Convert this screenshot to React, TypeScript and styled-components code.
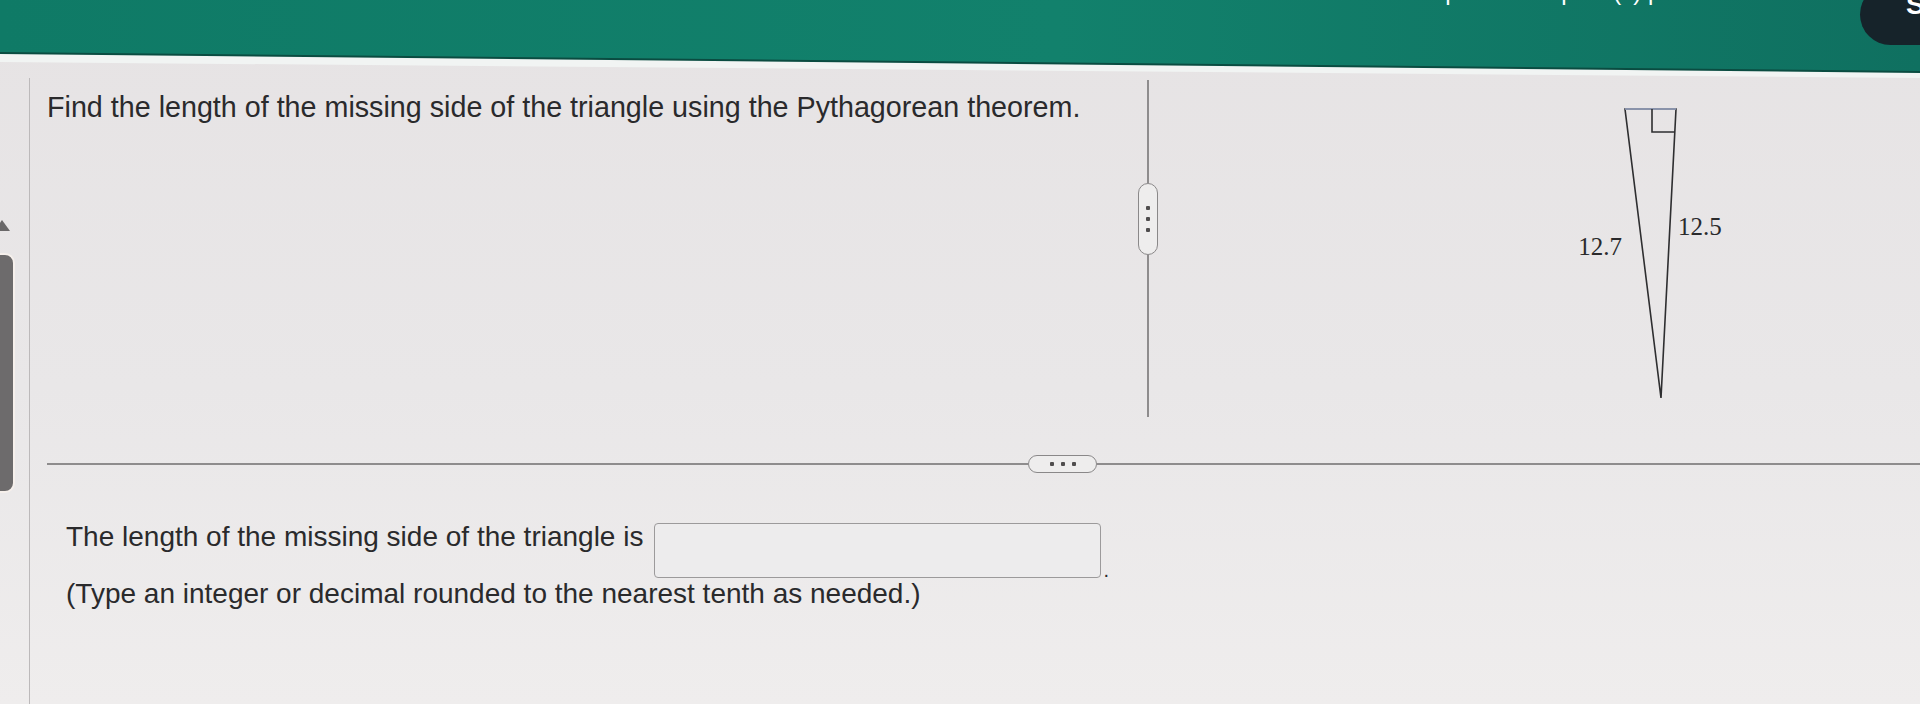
import React from "react";
import styled, { createGlobalStyle } from "styled-components";

const GlobalStyle = createGlobalStyle`
    html, body {
        margin: 0;
        padding: 0;
        width: 1920px;
        height: 704px;
        overflow: hidden;
    }
    body {
        background: linear-gradient(180deg, #e6e3e4 0%, #e9e7e8 55%, #efeded 100%);
        font-family: "Liberation Sans", Arial, sans-serif;
        color: #2a2a2c;
    }
`;

const Page = styled.div`
    width: 1920px;
    height: 704px;
    display: flex;
    flex-direction: column;
`;

// header: green bar, dark edge and light strip, tilted like the photo
const HeaderStrip = styled.header`
    flex: none;
    height: 78px;
    background: #f1f4f3;
    clip-path: polygon(0 0, 100% 0, 100% 78px, 0 62px);
`;

const HeaderEdge = styled.div`
    height: 100%;
    background: #0a4c41;
    clip-path: polygon(0 0, 100% 0, 100% 73px, 0 54px);
`;

const HeaderBar = styled.div`
    height: 100%;
    background: linear-gradient(90deg, #0f7a66 0%, #12816c 55%, #0f7060 100%);
    clip-path: polygon(0 0, 100% 0, 100% 71px, 0 52px);
    display: flex;
    justify-content: flex-end;
    align-items: flex-start;
`;

const HeaderText = styled.span`
    margin-top: -20px;
    margin-right: 124px;
    font-size: 24px;
    line-height: 24px;
    color: #ffffff;
    white-space: nowrap;
`;

const SaveButton = styled.div`
    margin-top: -16px;
    margin-right: -40px;
    height: 61px;
    width: 100px;
    box-sizing: border-box;
    padding: 6px 0 0 46px;
    border-radius: 32px;
    background: #16232a;
    color: #ffffff;
    font-weight: 700;
    font-size: 28px;
    line-height: 30px;
`;

const Body = styled.div`
    flex: 1;
    display: flex;
    min-height: 0;
`;

const Gutter = styled.div`
    flex: none;
    width: 29px;
    border-right: 1.5px solid #bcb9ba;
    display: flex;
    flex-direction: column;
    padding-top: 142px;
    overflow: hidden;
`;

const ScrollArrow = styled.div`
    width: 0;
    height: 0;
    margin-left: -6px;
    border-left: 8px solid transparent;
    border-right: 8px solid transparent;
    border-bottom: 11px solid #6a6869;
`;

const ScrollThumb = styled.div`
    margin-top: 22px;
    margin-left: -9px;
    width: 24px;
    height: 240px;
    box-sizing: border-box;
    border-radius: 10px;
    background: #6d6b6c;
    border: 2px solid #f6f0ec;
`;

const Main = styled.main`
    flex: 1;
    display: flex;
    flex-direction: column;
`;

const TopSection = styled.section`
    display: flex;
    height: 377px;
`;

const QuestionPane = styled.div`
    flex: none;
    width: 1091px;
    padding: 13px 0 0 17px;
`;

const QuestionText = styled.p`
    margin: 0;
    font-size: 28.7px;
    line-height: 32px;
    white-space: nowrap;
`;

const DividerColumn = styled.div`
    flex: none;
    width: 20px;
    padding-top: 2px;
    display: flex;
    flex-direction: column;
    align-items: center;
`;

const VLine = styled.div<{ $len: number }>`
    width: 1.5px;
    height: ${({ $len }) => $len}px;
    background: #8e8c8d;
`;

const Pill = styled.div<{ $vertical?: boolean }>`
    flex: none;
    box-sizing: border-box;
    width: ${({ $vertical }) => ($vertical ? "20px" : "69px")};
    height: ${({ $vertical }) => ($vertical ? "72px" : "18px")};
    border: 1.5px solid #8a8889;
    border-radius: 10px;
    background: #eeeded;
    display: flex;
    flex-direction: ${({ $vertical }) => ($vertical ? "column" : "row")};
    align-items: center;
    justify-content: center;
    gap: 7px;
`;

const Dot = styled.span`
    width: 4px;
    height: 4px;
    border-radius: 1px;
    background: #4f4d4e;
`;

const FigurePane = styled.div`
    flex: 1;
    padding: 22px 0 0 416px;
`;

const FigureLabel = styled.text`
    font-family: "Liberation Serif", "Times New Roman", serif;
    font-size: 25px;
    fill: #2a2a2c;
`;

const HDivider = styled.div`
    display: flex;
    align-items: center;
    margin-left: 17px;
    height: 18px;
`;

const HLine = styled.div<{ $width?: number }>`
    height: 1.5px;
    background: #8e8c8d;
    ${({ $width }) => ($width ? `width: ${$width}px; flex: none;` : "flex: 1;")}
`;

const AnswerSection = styled.section`
    margin-top: 48px;
    padding-left: 36px;
`;

const AnswerRow = styled.div`
    display: flex;
    align-items: flex-start;
`;

const Prompt = styled.span`
    font-size: 28px;
    line-height: 32px;
`;

const AnswerBox = styled.input`
    margin: 2px 0 0 11px;
    width: 447px;
    height: 55px;
    box-sizing: border-box;
    border: 1.5px solid #9c9a9b;
    border-radius: 4px;
    background: #edeced;
    outline: none;
    font-size: 24px;
`;

const Period = styled.span`
    align-self: flex-end;
    margin: 0 0 -2px 2px;
    font-size: 20px;
    line-height: 20px;
`;

const Hint = styled.p`
    margin: 0;
    font-size: 28px;
    line-height: 32px;
`;

const Dots: React.FC<{ vertical?: boolean }> = ({ vertical }) => (
    <Pill $vertical={vertical}>
        <Dot />
        <Dot />
        <Dot />
    </Pill>
);

const Triangle = () => (
    <svg width="150" height="300" viewBox="0 0 150 300">
        <polygon
            points="51,9 102,9 87,298"
            fill="none"
            stroke="#2e2e30"
            strokeWidth="1.6"
            strokeLinejoin="miter"
        />
        <line x1="51" y1="9" x2="102" y2="9" stroke="#9aa6c4" strokeWidth="1.6" />
        <path d="M78 9 V32 H100.8" fill="none" stroke="#2e2e30" strokeWidth="1.6" />
        <FigureLabel x="48" y="155" textAnchor="end">
            12.7
        </FigureLabel>
        <FigureLabel x="104" y="135">
            12.5
        </FigureLabel>
    </svg>
);

const App = () => {
    return (
        <>
            <GlobalStyle />
            <Page>
                <HeaderStrip>
                    <HeaderEdge>
                        <HeaderBar>
                            <HeaderText>This question: 1 point(s) possible</HeaderText>
                            <SaveButton>Save</SaveButton>
                        </HeaderBar>
                    </HeaderEdge>
                </HeaderStrip>
                <Body>
                    <Gutter>
                        <ScrollArrow />
                        <ScrollThumb />
                    </Gutter>
                    <Main>
                        <TopSection>
                            <QuestionPane>
                                <QuestionText>
                                    Find the length of the missing side of the triangle using the
                                    Pythagorean theorem.
                                </QuestionText>
                            </QuestionPane>
                            <DividerColumn>
                                <VLine $len={103} />
                                <Dots vertical />
                                <VLine $len={162} />
                            </DividerColumn>
                            <FigurePane>
                                <Triangle />
                            </FigurePane>
                        </TopSection>
                        <HDivider>
                            <HLine $width={981} />
                            <Dots />
                            <HLine />
                        </HDivider>
                        <AnswerSection>
                            <AnswerRow>
                                <Prompt>The length of the missing side of the triangle is</Prompt>
                                <AnswerBox aria-label="answer" readOnly value="" />
                                <Period>.</Period>
                            </AnswerRow>
                            <Hint>(Type an integer or decimal rounded to the nearest tenth as needed.)</Hint>
                        </AnswerSection>
                    </Main>
                </Body>
            </Page>
        </>
    );
};

export default App;
